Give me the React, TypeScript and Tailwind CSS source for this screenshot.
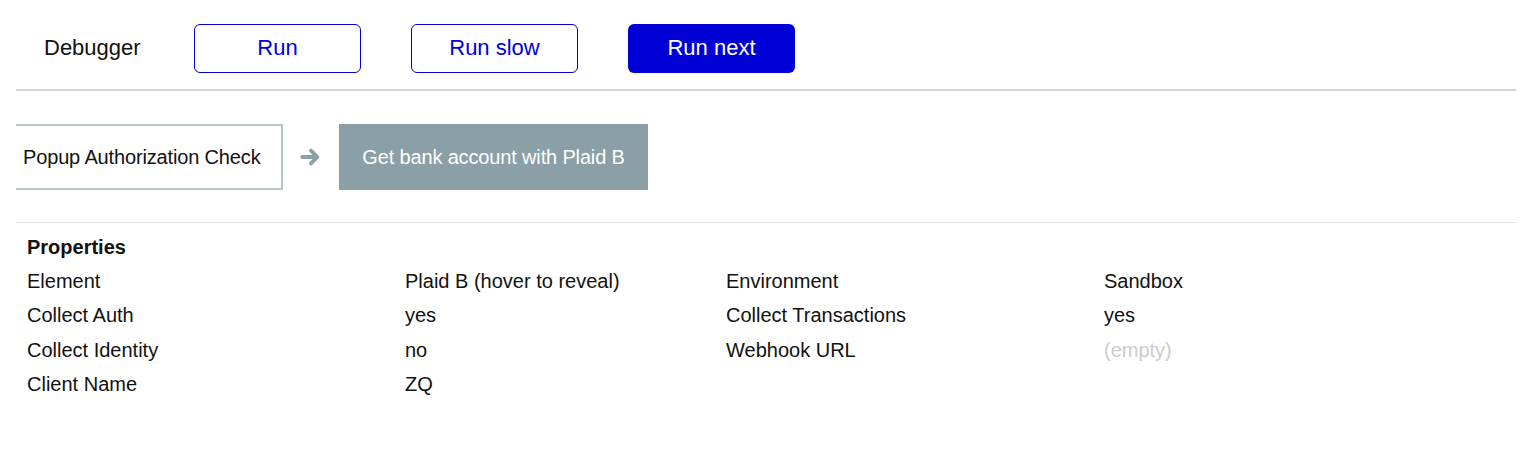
import React from "react";

const rows = [
  ["Element", "Plaid B (hover to reveal)", "Environment", "Sandbox"],
  ["Collect Auth", "yes", "Collect Transactions", "yes"],
  ["Collect Identity", "no", "Webhook URL", ""],
  ["Client Name", "ZQ", "", ""],
];

export default function App() {
  return (
    <div className="min-h-screen bg-white text-[#111] font-['Liberation_Sans',Arial,sans-serif]">
      <div className="ml-4 w-[1500px]">
        {/* toolbar */}
        <div className="flex items-center pt-6 pb-4 pl-7 border-b-2 border-[#d6d6d6]">
          <span className="text-[22px] w-[150px] pb-[2px]">Debugger</span>
          <div className="flex gap-[50px]">
            <button className="w-[167px] h-[49px] pb-[3px] rounded-md border-[1.5px] border-[#0000d4] text-[#0000d4] text-[22px] bg-white">
              Run
            </button>
            <button className="w-[167px] h-[49px] pb-[3px] rounded-md border-[1.5px] border-[#0000d4] text-[#0000d4] text-[22px] bg-white">
              Run slow
            </button>
            <button className="w-[167px] h-[49px] pb-[3px] rounded-md bg-[#0000d6] text-white text-[22px]">
              Run next
            </button>
          </div>
        </div>

        {/* flow */}
        <div className="flex items-center pt-[33px] pb-[32px] border-b border-[#e4e4e4]">
          <div className="w-[267px] h-[66px] flex items-center pl-[7px] border-2 border-l-0 border-[#b9c6ca] text-[20px] tracking-[-0.15px]">
            Popup Authorization Check
          </div>
          <svg className="ml-[16px] mr-[17px]" width="23" height="22" viewBox="0 0 24 24">
            <path
              d="M3 12H19M12.5 5L19.5 12L12.5 19"
              fill="none"
              stroke="#8a9fa6"
              strokeWidth="4.2"
              strokeLinecap="round"
              strokeLinejoin="round"
            />
          </svg>
          <div className="w-[309px] h-[66px] flex items-center justify-center bg-[#8a9fa6] text-white text-[20px] tracking-[-0.15px]">
            Get bank account with Plaid B
          </div>
        </div>

        {/* properties */}
        <div className="pl-[11px] pt-[8px] text-[20px]">
          <div className="font-bold leading-[33px]">Properties</div>
          <div className="grid grid-cols-[378px_321px_378px_1fr]">
            {rows.map((r, i) => (
              <React.Fragment key={i}>
                <div className="leading-[34.3px]">{r[0]}</div>
                <div className="leading-[34.3px]">{r[1]}</div>
                <div className="leading-[34.3px]">{r[2]}</div>
                <div className={`leading-[34.3px] ${r[2] === "Webhook URL" ? "text-[#cccccc]" : ""}`}>
                  {r[2] === "Webhook URL" ? "(empty)" : r[3]}
                </div>
              </React.Fragment>
            ))}
          </div>
        </div>
      </div>
    </div>
  );
}
